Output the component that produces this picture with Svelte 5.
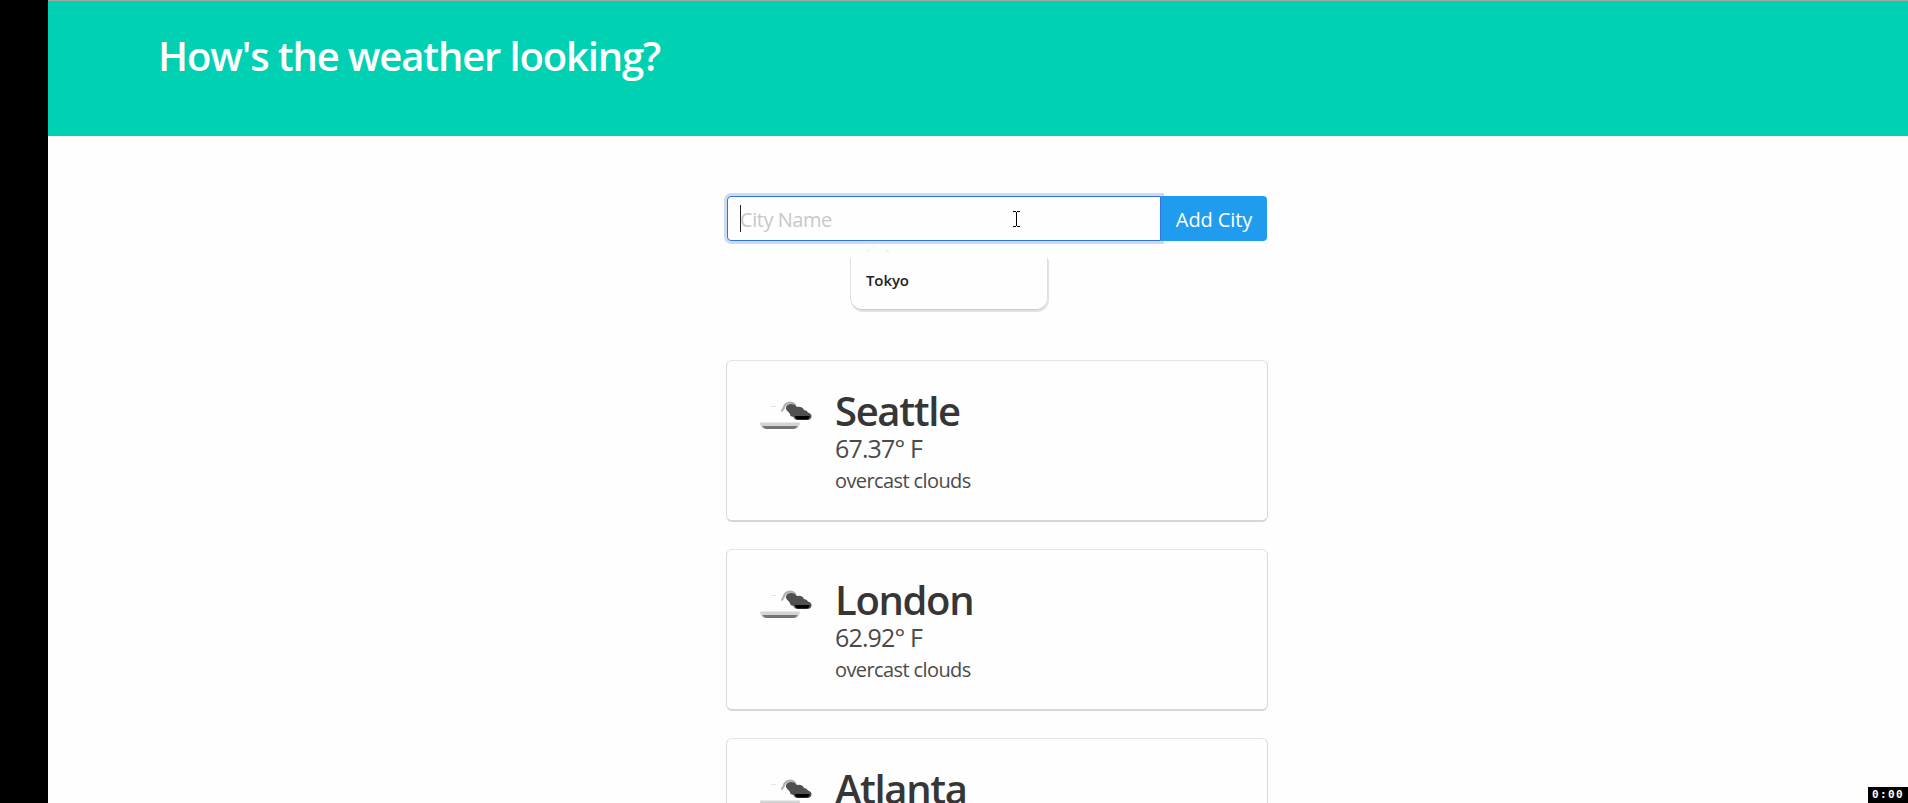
<script>
  const cities = [
    { name: 'Seattle', temp: '67.37° F', sky: 'overcast clouds' },
    { name: 'London', temp: '62.92° F', sky: 'overcast clouds' },
    { name: 'Atlanta' }
  ];
</script>

<div class="screen">
  <div class="gutter"></div>
  <div class="page">
    <header><h1>How's the weather looking?</h1></header>
    <main>
      <div class="form">
        <div class="input"><span class="caret"></span><span class="placeholder">City Name</span></div>
        <button>Add City</button>
        <svg class="arrow" width="24" height="11" viewBox="0 0 24 11">
          <path d="M1 9.500l2-1M20 8l3 2" fill="none" stroke="#dfe2e4" />
          <path d="M3 8l5-5" fill="none" stroke="#e9f7fa" />
        </svg>
        <div class="suggest"><span>Tokyo</span></div>
        <svg class="pointer" width="7" height="16" viewBox="0 0 7 16" shape-rendering="crispEdges">
          <path d="M0 .5h3M4 .5h3M3.500 1v14M0 15.500h3M4 15.500h3" fill="none" stroke="#000" />
        </svg>
      </div>
      <div class="cards">
        {#each cities as c}
          <article>
            <svg class="icon" width="52" height="30" viewBox="0 0 52 30">
              <path d="M11 5.500h5" stroke="#e4e4e4" />
              <path d="M21.500 10.500l2-3C25 1 32 0 35.500 4.500" fill="none" stroke="#b0b0b0" stroke-width="2.200" />
              <path d="M26 6q1-3 5-3 4 0 6 3 5-1 7 3 3 0 4 2.500 4 1 3.500 4.500-1 3-4 3h-10q-3 0-4-3l-3-1q0-2-2-4-3-2-2.500-5z" fill="#505050" />
              <path d="M35 15h14.500q0 3-3 3.500h-8q-3 0-3.500-3.500z" fill="#000" />
              <path d="M0 21.500h40q-.5 6-5 6.500H5q-4.500-.5-5-6.500z" fill="#d4d4d4" />
              <path d="M2.500 25h35q-1 2.800-3.500 3H6q-2.500-.2-3.500-3z" fill="#747474" />
            </svg>
            <div class="info">
              <h2>{c.name}</h2>
              {#if c.temp}
                <p class="temp">{c.temp}</p>
                <p class="sky">{c.sky}</p>
              {/if}
            </div>
          </article>
        {/each}
      </div>
    </main>
  </div>
  <div class="timer">0:00</div>
</div>

<style>
  :global(body) { margin: 0; overflow: hidden; background: #fefefe; }
  * { box-sizing: border-box; }
  .screen { position: relative; display: flex; width: 1908px; height: 803px; overflow: hidden; background: #fefefe; font-family: "Open Sans", "Noto Sans", sans-serif; }
  .gutter { width: 48px; background: #000; }
  .page { flex: 1; min-width: 0; }
  header { height: 136px; background: #00d1b2; border-top: 1px solid #9fa9a5; padding: 31px 0 0 110px; }
  h1 { margin: 0; color: #fff; font-size: 40px; line-height: 48px; font-weight: 600; letter-spacing: -1.15px; white-space: nowrap; }
  main { width: 542px; margin-left: 678px; padding-top: 60px; }
  .form { position: relative; display: flex; width: 541px; height: 45px; padding-left: 1px; }
  .input { width: 434px; display: flex; align-items: center; padding-left: 12px; border: 1px solid #3273dc; border-radius: 4px 0 0 4px; background: #fefefe; box-shadow: 0 0 0 3px rgba(50, 115, 220, .25); }
  .caret { flex: none; width: 1px; height: 27px; background: #222; }
  .placeholder { margin-left: -1px; padding-top: 2px; font-size: 20px; line-height: 30px; letter-spacing: -.45px; color: #c8c8c8; white-space: nowrap; }
  button { position: relative; width: 106px; border: 0; padding: 2px 0 0; border-radius: 0 4px 4px 0; background: #209cee; color: #fff; font: 400 20px/43px "Open Sans", sans-serif; letter-spacing: -.1px; white-space: nowrap; }
  .arrow { position: absolute; left: 140px; top: 46px; }
  .suggest { position: absolute; left: 124px; top: 62px; width: 198px; height: 52px; padding: 12px 0 0 15px; border: 1px solid #dedfe2; border-top: 0; border-bottom-color: #ccc; border-radius: 0 0 12px 12px; box-shadow: 1px 2px 0 #e3e3e5; font-size: 15px; line-height: 20px; font-weight: 600; color: #222; letter-spacing: -.1px; }
  .pointer { position: absolute; left: 287px; top: 15px; }
  .cards { display: flex; flex-direction: column; gap: 27px; margin-top: 119px; }
  article { display: flex; height: 162px; border: 1px solid #dadada; border-top-color: #e4e4e4; border-bottom: 2px solid #d6d6d6; border-radius: 6px; padding: 27px 0 0 33px; }
  .icon { margin-top: 13px; }
  .info { margin-left: 23px; white-space: nowrap; }
  h2 { margin: 0; color: #363636; font-size: 40px; line-height: 45px; font-weight: 600; letter-spacing: -1.35px; }
  p { margin: 0; color: #4a4a4a; }
  .temp { font-size: 25px; line-height: 31px; letter-spacing: -.85px; }
  .sky { margin-top: 2px; font-size: 20px; line-height: 30px; letter-spacing: -.6px; }
  .timer { position: absolute; right: 0; bottom: 0; width: 40px; height: 16px; padding-left: 4px; background: #000; color: #fff; font: bold 11px/16px "DejaVu Sans Mono", monospace; letter-spacing: 1.4px; }
</style>
